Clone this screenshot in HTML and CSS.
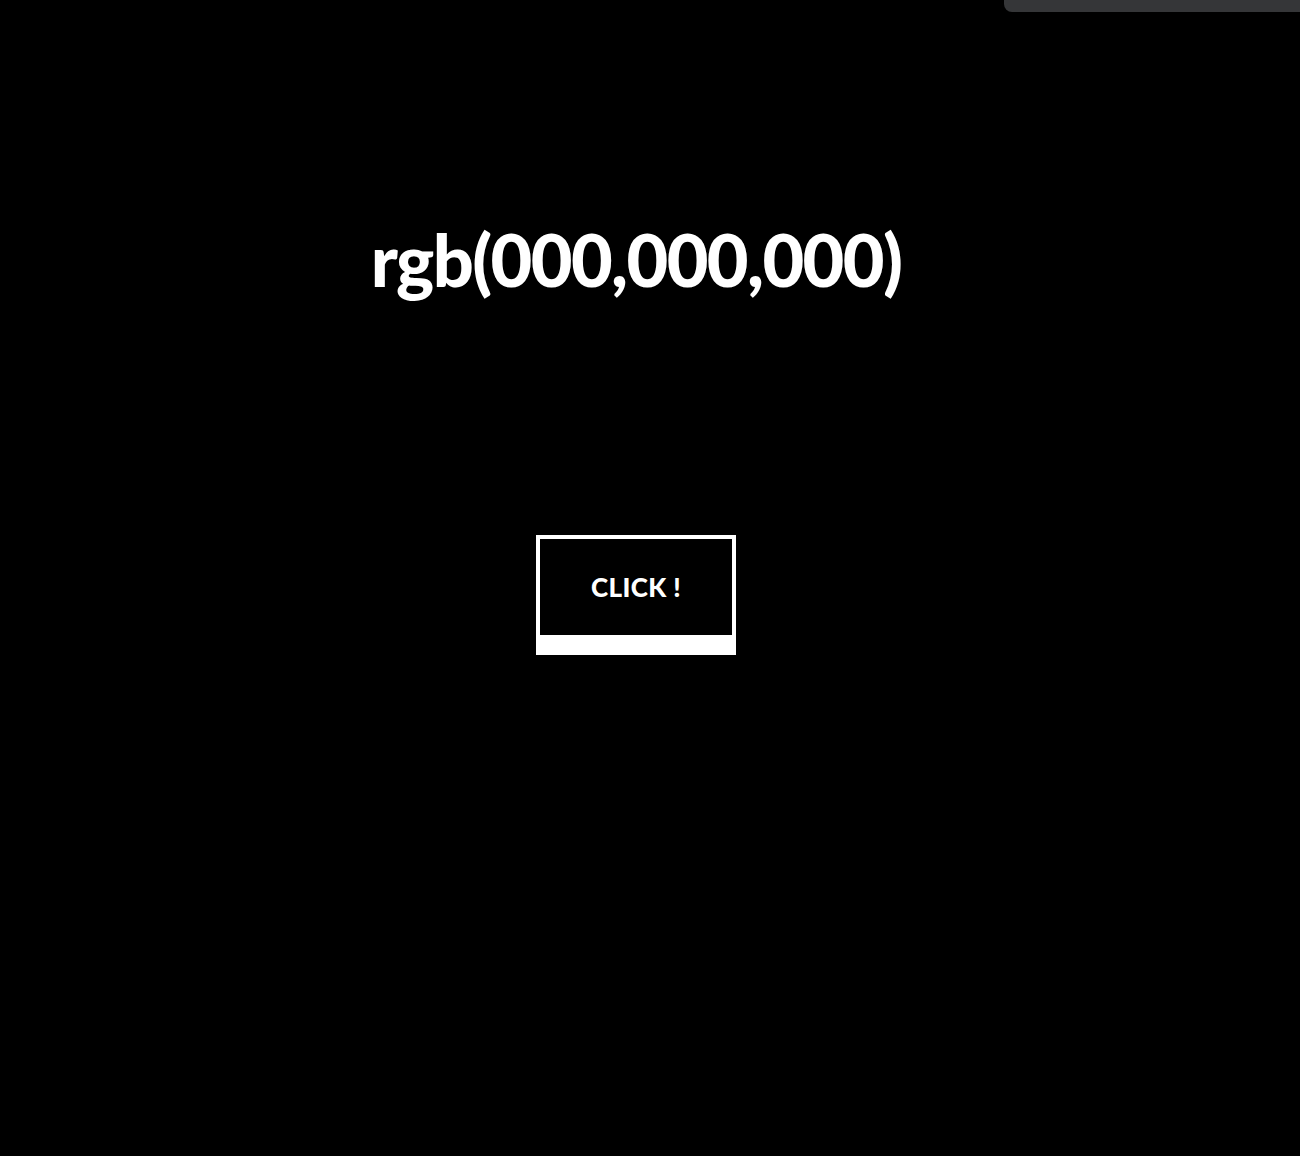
FILE: index.html
```html
<!DOCTYPE html>
<html>
<head>
<meta charset="utf-8">
<link rel="stylesheet" href="styles.css">
</head>
<body>
<div class="topbar"></div>
<main class="page">
  <h1 class="value">rgb(000,000,000)</h1>
  <button class="btn">CLICK !</button>
</main>
</body>
</html>
```
FILE: styles.css
```css
html, body {
  margin: 0;
  padding: 0;
  background: #000;
  height: 100%;
}
body {
  font-family: Lato, "Noto Sans", sans-serif;
  color: #fff;
  overflow: hidden;
}
.topbar {
  position: absolute;
  top: 0;
  left: 1004px;
  width: 296px;
  height: 12px;
  background: #353638;
  border-bottom-left-radius: 8px;
}
.page {
  width: 1272px;
  display: flex;
  flex-direction: column;
  align-items: center;
}
.value {
  margin: 209px 0 0;
  font-size: 72px;
  font-weight: 900;
  line-height: 100px;
  letter-spacing: -1.6px;
}
.btn {
  margin-top: 226px;
  width: 200px;
  height: 120px;
  box-sizing: border-box;
  background: #000;
  color: #fff;
  border: 4px solid #fff;
  border-bottom-width: 20px;
  font-family: Lato, "Noto Sans", sans-serif;
  font-weight: 900;
  font-size: 26px;
  letter-spacing: 0.4px;
  padding: 0;
}
```
